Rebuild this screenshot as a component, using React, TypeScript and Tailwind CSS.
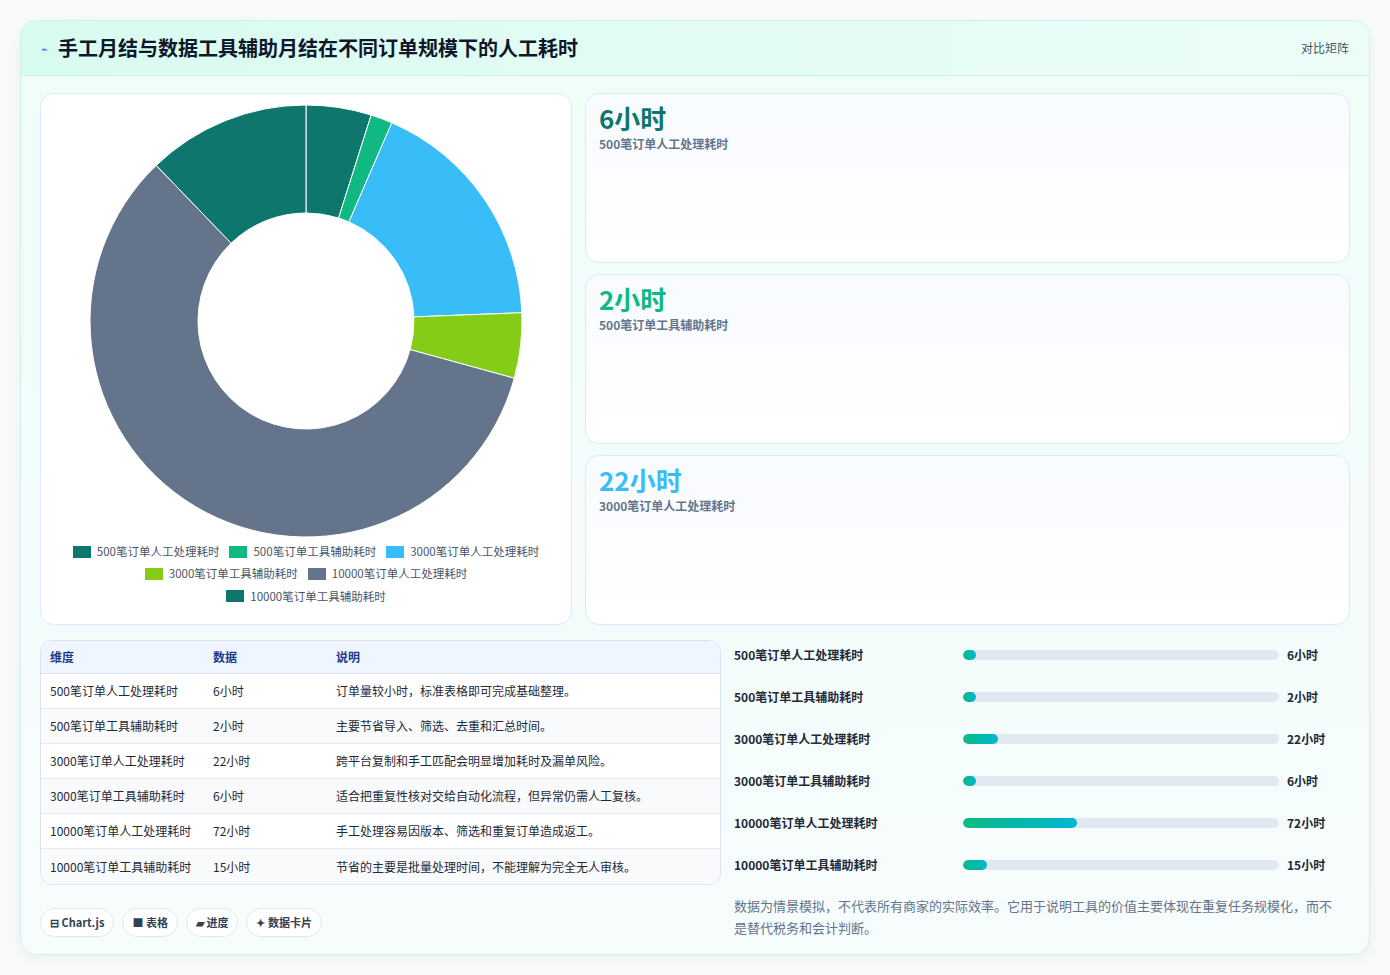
import React from "react";

const data = [
  { label: "500笔订单人工处理耗时", v: 6, color: "#0f766e", desc: "订单量较小时，标准表格即可完成基础整理。" },
  { label: "500笔订单工具辅助耗时", v: 2, color: "#10b981", desc: "主要节省导入、筛选、去重和汇总时间。" },
  { label: "3000笔订单人工处理耗时", v: 22, color: "#38bdf8", desc: "跨平台复制和手工匹配会明显增加耗时及漏单风险。" },
  { label: "3000笔订单工具辅助耗时", v: 6, color: "#84cc16", desc: "适合把重复性核对交给自动化流程，但异常仍需人工复核。" },
  { label: "10000笔订单人工处理耗时", v: 72, color: "#64748b", desc: "手工处理容易因版本、筛选和重复订单造成返工。" },
  { label: "10000笔订单工具辅助耗时", v: 15, color: "#0f766e", desc: "节省的主要是批量处理时间，不能理解为完全无人审核。" },
];

function Donut() {
  const total = data.reduce((s, d) => s + d.v, 0);
  const cx = 216, cy = 216, R = 216, r = 108;
  let a0 = 0;
  const pt = (rad: number, a: number) => [cx + rad * Math.sin(a), cy - rad * Math.cos(a)];
  return (
    <svg width="432" height="432" viewBox="0 0 432 432">
      {data.map((d, i) => {
        const a1 = a0 + (d.v / total) * Math.PI * 2;
        const large = a1 - a0 > Math.PI ? 1 : 0;
        const [x0, y0] = pt(R, a0), [x1, y1] = pt(R, a1), [x2, y2] = pt(r, a1), [x3, y3] = pt(r, a0);
        const p = `M${x0} ${y0} A${R} ${R} 0 ${large} 1 ${x1} ${y1} L${x2} ${y2} A${r} ${r} 0 ${large} 0 ${x3} ${y3} Z`;
        a0 = a1;
        return <path key={i} d={p} fill={d.color} stroke="#fff" strokeWidth="1" />;
      })}
    </svg>
  );
}

function Legend({ d }: { d: typeof data[0] }) {
  return (
    <span className="flex items-center gap-[6px]">
      <span className="w-[18px] h-[12px]" style={{ background: d.color }} />
      <span>{d.label}</span>
    </span>
  );
}

export default function App() {
  const cards = [
    { v: "6小时", c: "text-[#0f766e]", l: "500笔订单人工处理耗时" },
    { v: "2小时", c: "text-[#10b981]", l: "500笔订单工具辅助耗时" },
    { v: "22小时", c: "text-[#38bdf8]", l: "3000笔订单人工处理耗时" },
  ];
  return (
    <div className="w-[1390px] h-[975px] bg-[#f8fafc] pt-[20px] px-[20px]" style={{ fontFamily: '"Noto Sans CJK SC", "Noto Sans", sans-serif' }}>
      <div className="h-[935px] rounded-[16px] border border-[#ccf5e8] bg-gradient-to-b from-[#effdf8] to-[#f7fcfd] overflow-hidden shadow-[0_4px_14px_rgba(0,0,0,0.05)]">
        <div className="h-[55px] flex items-center justify-between px-[20px] bg-gradient-to-r from-[#d8fbf0] to-[#ecfdf8] border-b border-[#cdf3e7]">
          <div className="flex items-center gap-[10px]">
            <span className="text-[11px] text-[#2563eb]">⌁</span>
            <span className="text-[20px] font-bold text-[#0f172a]">手工月结与数据工具辅助月结在不同订单规模下的人工耗时</span>
          </div>
          <span className="text-[12px] text-[#475569]">对比矩阵</span>
        </div>
        <div className="px-[19px] pt-[17px]">
          <div className="flex gap-[13px]">
            <div className="w-[532px] h-[532px] rounded-[14px] border border-[#dbeafe] bg-white flex flex-col items-center pt-[11px]">
              <Donut />
              <div className="mt-[6px] flex flex-col items-center gap-[5px] text-[11.5px] text-[#475569]">
                <div className="flex gap-[10px]"><Legend d={data[0]} /><Legend d={data[1]} /><Legend d={data[2]} /></div>
                <div className="flex gap-[10px]"><Legend d={data[3]} /><Legend d={data[4]} /></div>
                <div className="flex gap-[10px]"><Legend d={data[5]} /></div>
              </div>
            </div>
            <div className="flex-1 flex flex-col gap-[11px]">
              {cards.map((c, i) => (
                <div key={i} className="h-[170px] rounded-[14px] border border-[#dbeafe] bg-gradient-to-b from-[#f8fbff] to-white px-[13px] pt-[7px]">
                  <div className={`text-[26px] font-bold leading-[34px] ${c.c}`}>{c.v}</div>
                  <div className="text-[12px] font-semibold text-[#64748b]">{c.l}</div>
                </div>
              ))}
            </div>
          </div>
          <div className="flex gap-[13px] mt-[15px]">
            <div className="w-[681px]">
              <div className="rounded-[12px] border border-[#dbe3ee] overflow-hidden bg-white text-[12px] text-[#1f2937]">
                <div className="flex h-[33px] items-center bg-[#eff6ff] border-b border-[#dbe3ee] text-[#1e3a8a] font-semibold">
                  <span className="w-[172px] pl-[9px]">维度</span><span className="w-[123px]">数据</span><span>说明</span>
                </div>
                {data.map((d, i) => (
                  <div key={i} className={`flex h-[35px] items-center ${i < 5 ? "border-b border-[#e5eaf1]" : ""} ${i % 2 ? "bg-[#f8fafc]" : "bg-white"}`}>
                    <span className="w-[172px] pl-[9px]">{d.label}</span><span className="w-[123px]">{d.v}小时</span><span>{d.desc}</span>
                  </div>
                ))}
              </div>
              <div className="flex gap-[8px] mt-[23px] text-[11px] font-semibold text-[#334155]">
                {["⊟ Chart.js", "■ 表格", "▰ 进度", "✦ 数据卡片"].map((t) => (
                  <span key={t} className="h-[29px] px-[9px] flex items-center rounded-full border border-[#e2e8f0] bg-white">{t}</span>
                ))}
              </div>
            </div>
            <div className="flex-1 pr-[6px] -mt-[6px]">
              {data.map((d, i) => (
                <div key={i} className="flex items-center h-[42px] text-[12px] font-semibold text-[#1f2937]">
                  <span className="w-[229px]">{d.label}</span>
                  <div className="w-[316px] h-[10px] rounded-full bg-[#e2e8f0] overflow-hidden">
                    <div className="h-full rounded-full bg-gradient-to-r from-[#10b981] to-[#06b6d4]" style={{ width: `${Math.max(4, (d.v / 200) * 100)}%` }} />
                  </div>
                  <span className="ml-[8px]">{d.v}小时</span>
                </div>
              ))}
              <p className="mt-[9px] text-[13px] leading-[22px] text-[#64748b]">数据为情景模拟，不代表所有商家的实际效率。它用于说明工具的价值主要体现在重复任务规模化，而不是替代税务和会计判断。</p>
            </div>
          </div>
        </div>
      </div>
    </div>
  );
}
